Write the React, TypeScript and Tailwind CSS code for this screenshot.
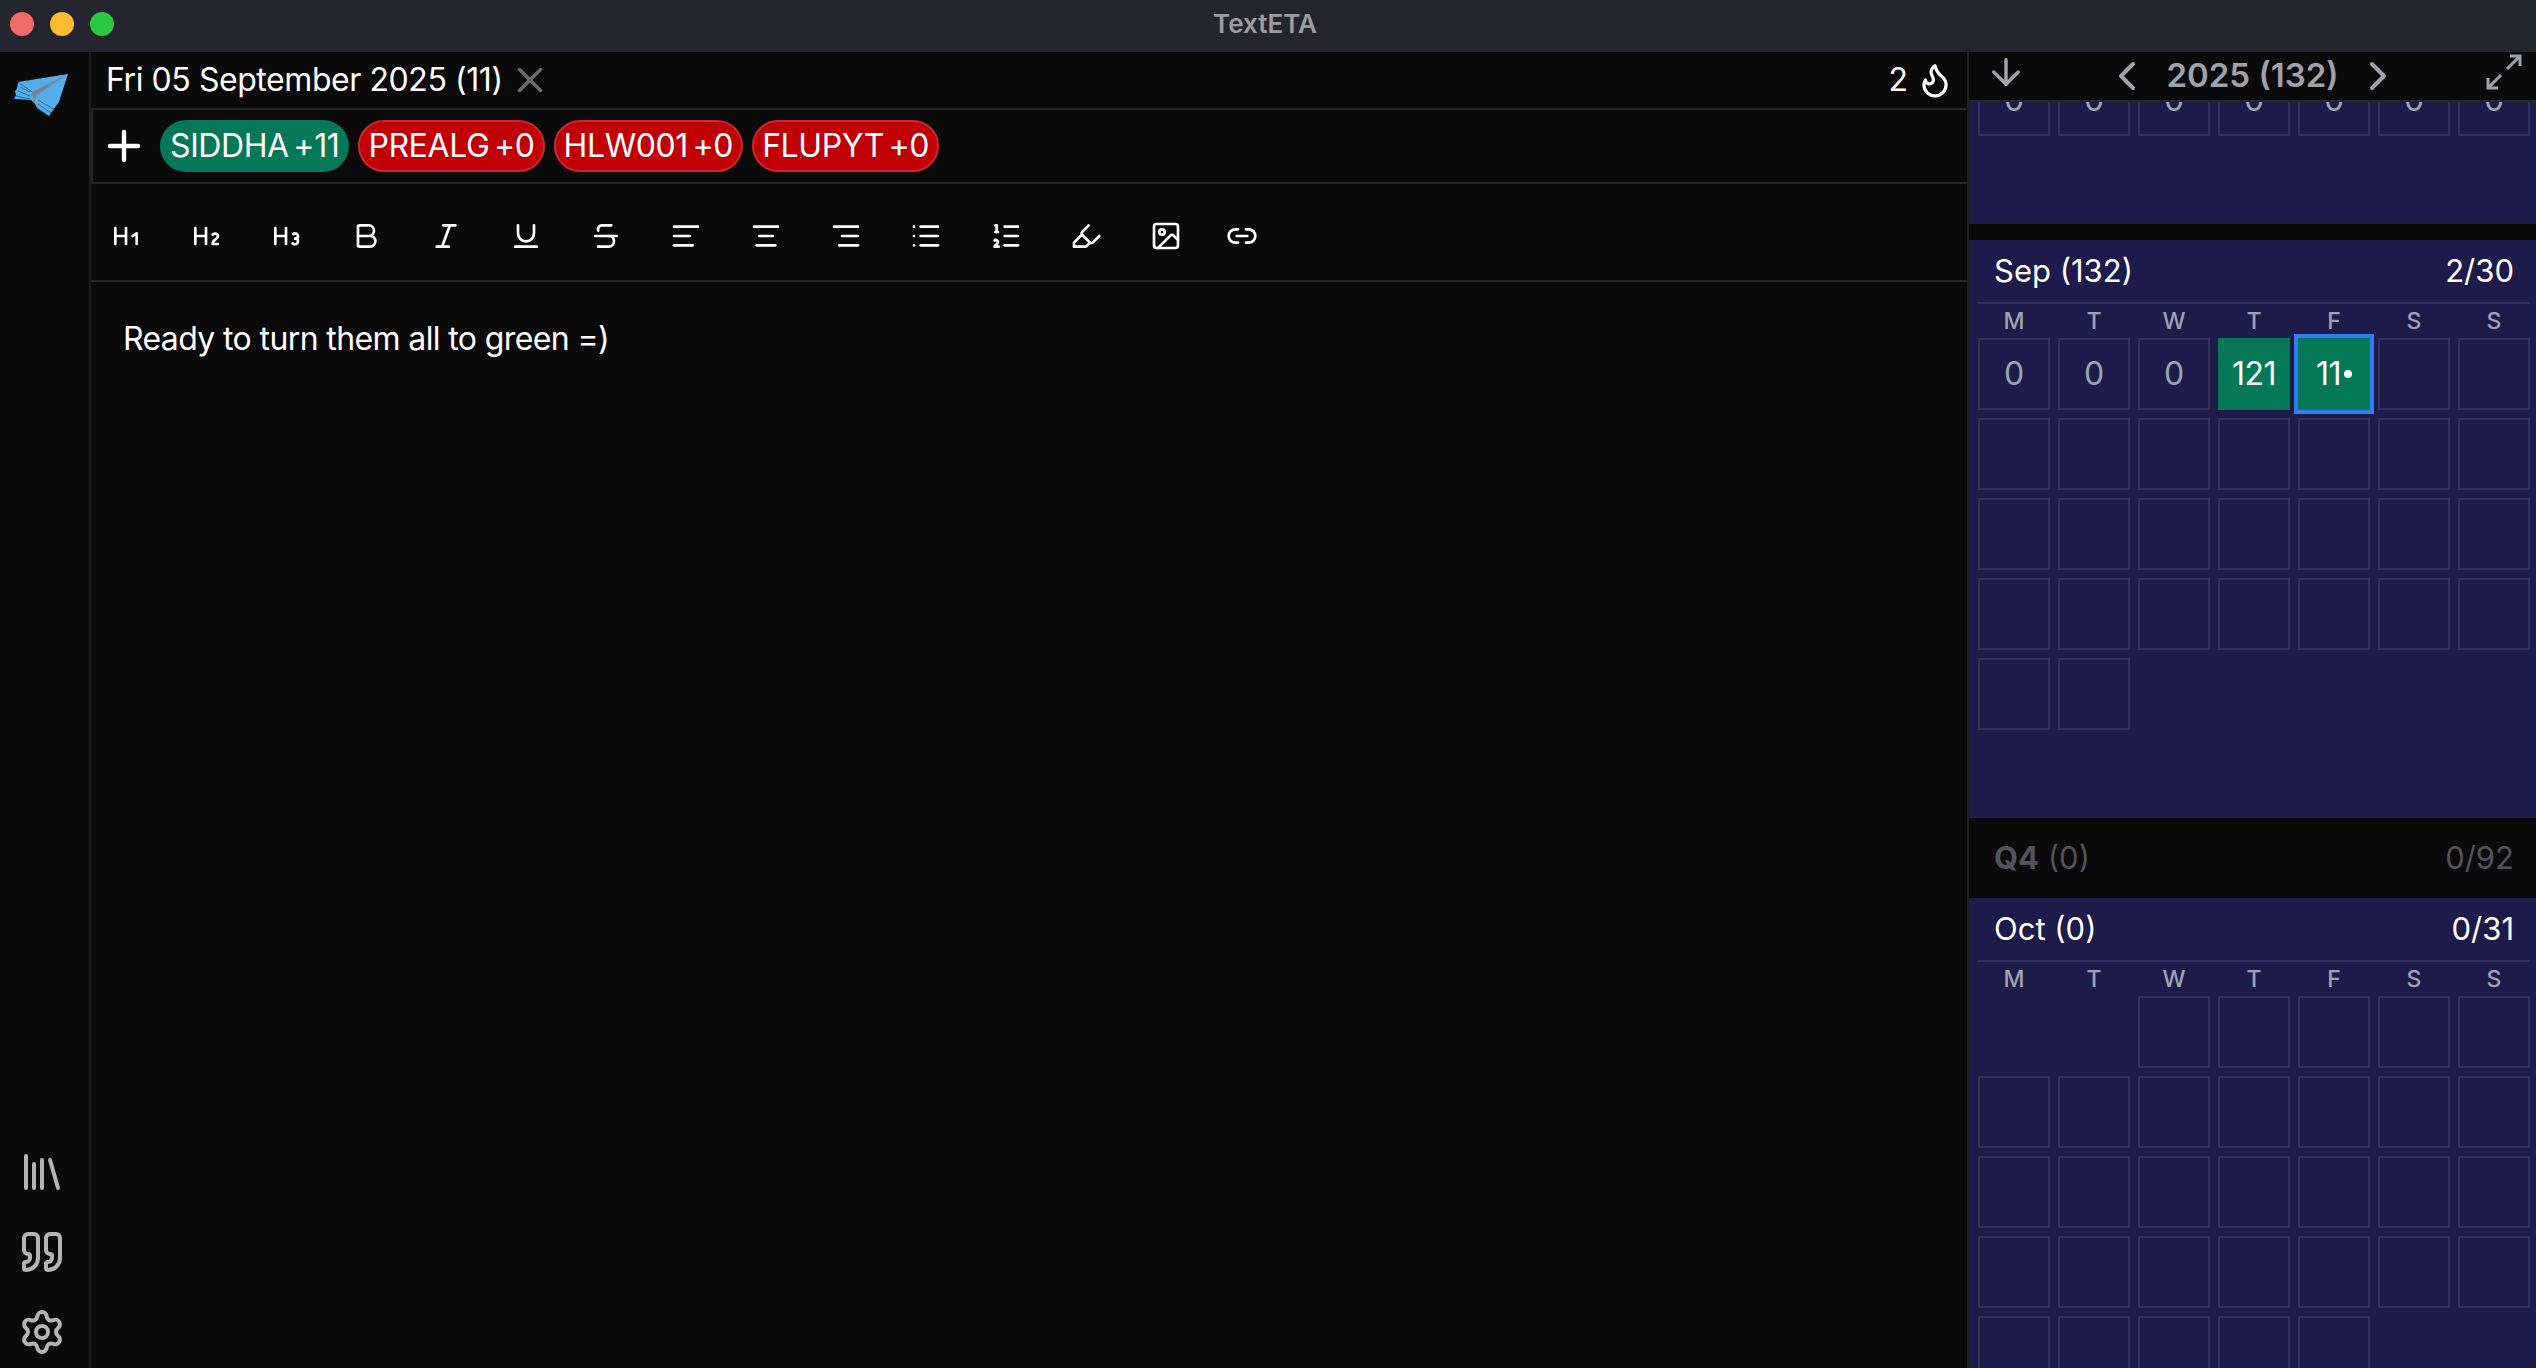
import React from "react";
import {
  Heading1, Heading2, Heading3, Bold, Italic, Underline, Strikethrough,
  AlignLeft, AlignCenter, AlignRight, List, ListOrdered, Highlighter, Image, Link2,
  Plus, X, ArrowDown, ChevronLeft, ChevronRight, Library, Quote, Settings, Flame,
} from "lucide-react";

const days = ["M", "T", "W", "T", "F", "S", "S"];

function Cell({ v, kind }: { v?: string; kind?: "blank" | "green" | "today" }) {
  if (kind === "blank") return <div className="h-[72px] w-[72px]" />;
  if (kind === "green")
    return <div className="flex h-[72px] w-[72px] items-center justify-center bg-[#047857] text-[32px] tracking-[-0.5px] text-white">{v}</div>;
  if (kind === "today")
    return (
      <div className="flex h-[72px] w-[72px] items-center justify-center bg-[#047857] text-[32px] tracking-[-0.5px] text-white outline-4 outline-[#2f7df0]">
        11<span className="ml-[3px] h-[8px] w-[8px] rounded-full bg-white" />
      </div>
    );
  return <div className="flex h-[72px] w-[72px] items-center justify-center border-2 border-[#33305c] text-[32px] text-[#9ca3af]">{v}</div>;
}

function Month({ title, count, first, cells }: { title: string; count: string; first: number; cells: React.ReactNode[] }) {
  const leading = Array.from({ length: first }, (_, i) => <Cell key={"b" + i} kind="blank" />);
  return (
    <section className="bg-[#1e1b4b] pb-[88px] pl-[9px] pr-[6px]">
      <div className="flex h-[64px] items-center justify-between border-b-2 border-[#33305c] px-[16px] text-[31px] text-white">
        <span>{title}</span>
        <span>{count}</span>
      </div>
      <div className="grid grid-cols-[repeat(7,72px)] gap-x-[8px]">
        {days.map((d, i) => (
          <div key={i} className="flex h-[34px] items-center justify-center text-[23px] font-medium text-[#9ca3af]">{d}</div>
        ))}
      </div>
      <div className="grid grid-cols-[repeat(7,72px)] gap-[8px]">
        {leading}
        {cells}
      </div>
    </section>
  );
}

const empties = (n: number) => Array.from({ length: n }, (_, i) => <Cell key={"e" + i} />);

function Tag({ label, green }: { label: string; green?: boolean }) {
  return (
    <span
      className={
        green
          ? "flex h-[52px] items-center rounded-full bg-[#047857] px-[10px] text-[32px] tracking-[-0.4px] text-white [word-spacing:-4px]"
          : "flex h-[52px] items-center rounded-full border-2 border-[#c8282e] bg-[#c00006] px-[8px] text-[32px] tracking-[-0.4px] text-white [word-spacing:-4px]"
      }
    >
      {label}
    </span>
  );
}

const tools = [Heading1, Heading2, Heading3, Bold, Italic, Underline, Strikethrough, AlignLeft, AlignCenter, AlignRight, List, ListOrdered, Highlighter, Image];

export default function App() {
  return (
    <div className="flex h-screen w-screen flex-col overflow-hidden bg-[#0a0a0a] font-[Inter,sans-serif] text-white">
      <header className="relative flex h-[52px] shrink-0 items-center justify-center bg-[#23242e] pb-[5px] pr-[6px]">
        <div className="absolute left-[10px] top-[12px] flex gap-[16px]">
          <span className="h-[24px] w-[24px] rounded-full bg-[#f26b66]" />
          <span className="h-[24px] w-[24px] rounded-full bg-[#febc2e]" />
          <span className="h-[24px] w-[24px] rounded-full bg-[#28c840]" />
        </div>
        <span className="text-[26px] font-semibold text-[#9b9ba1]">TextETA</span>
      </header>
      <div className="flex min-h-0 flex-1">
        <aside className="flex w-[89px] shrink-0 flex-col justify-between pb-[12px] pl-[18px] text-[#b4b4b4]">
          <svg viewBox="0 0 80 80" className="-ml-[18px] -mt-[2px] h-[80px] w-[80px]">
            <polygon points="68,24 18,32 17,39 15,41 16,45 14,49 31,50 35,54 37,58 49,66 53,60 59,52" fill="#54aeec" />
            <polygon points="68,24 32,42 34,54 37,45" fill="#7c8494" />
            <path d="M18 32 32 42M20 37l10 5M18 41l12 5M16 46l14 3M38 50l17 10M38 54l13 9M37 58l10 7" stroke="#2f4f86" strokeWidth="0.8" fill="none" />
          </svg>
          <div className="flex flex-col gap-[32px]">
            <Library size={48} strokeWidth={2} />
            <Quote size={48} strokeWidth={2} />
            <Settings size={48} strokeWidth={2} />
          </div>
        </aside>
        <main className="flex min-w-0 flex-1 flex-col border-l-2 border-[#1f1f1f]">
          <div className="flex h-[58px] shrink-0 items-center justify-between border-b-2 border-[#262626] pl-[15px] pr-[13px]">
            <div className="flex items-center gap-[6px]">
              <span className="text-[32px] tracking-[-0.43px]">Fri 05 September 2025 (11)</span>
              <X size={42} className="text-[#6b6b6b]" strokeWidth={2} />
            </div>
            <div className="flex items-center gap-[8px]">
              <span className="text-[32px]">2</span>
              <Flame size={38} strokeWidth={2} />
            </div>
          </div>
          <div className="flex h-[74px] shrink-0 items-center gap-[9px] border-b-2 border-l-2 border-[#262626] pl-[7px]">
            <Plus size={48} strokeWidth={2.2} className="mr-[3px]" />
            <Tag label="SIDDHA +11" green />
            <Tag label="PREALG +0" />
            <Tag label="HLW001 +0" />
            <Tag label="FLUPYT +0" />
          </div>
          <div className="flex h-[98px] shrink-0 items-center gap-[48px] border-b-2 border-[#262626] pl-[19px] pt-[8px]">
            {tools.map((I, i) => (
              <I key={i} size={32} strokeWidth={2} />
            ))}
            <Link2 size={32} strokeWidth={2} className="-ml-[4px]" />
          </div>
          <div className="px-[32px] pt-[33px] text-[32px] tracking-[-0.62px]">Ready to turn them all to green =)</div>
        </main>
        <aside className="flex w-[569px] shrink-0 flex-col border-l-2 border-[#1f1f1f]">
          <div className="relative flex h-[50px] shrink-0 items-center justify-center border-b-2 border-[#262626] text-[#a1a1aa]">
            <ArrowDown size={42} className="absolute -top-[1px] left-[16px]" />
            <div className="flex items-center gap-[15px]">
              <ChevronLeft size={48} />
              <span className="text-[33px] font-semibold">2025 (132)</span>
              <ChevronRight size={48} />
            </div>
            <svg viewBox="0 0 36 36" className="absolute right-[14px] top-[2px] h-[36px] w-[36px]" fill="none" stroke="currentColor" strokeWidth="3">
              <path d="M34 2 21 15M24 2h10v10M2 34l13-13M2 24v10h10" />
            </svg>
          </div>
          <div className="min-h-0 flex-1 overflow-hidden">
            <div className="bg-[#1e1b4b] pb-[88px] pl-[9px] pr-[6px]">
              <div className="h-[34px] overflow-hidden">
                <div className="-mt-[38px] grid grid-cols-[repeat(7,72px)] gap-[8px]">{empties(7).map((_, i) => <Cell key={i} v="0" />)}</div>
              </div>
            </div>
            <div className="h-[16px]" />
            <Month
              title="Sep (132)"
              count="2/30"
              first={0}
              cells={[
                <Cell key="a" v="0" />, <Cell key="b" v="0" />, <Cell key="c" v="0" />,
                <Cell key="d" v="121" kind="green" />, <Cell key="f" kind="today" />,
                ...empties(2 + 21 + 2),
              ]}
            />
            <div className="flex h-[80px] items-center justify-between pl-[25px] pr-[22px] text-[31px] text-[#52525b]">
              <span><b>Q4</b> (0)</span>
              <span>0/92</span>
            </div>
            <Month title="Oct (0)" count="0/31" first={2} cells={empties(31)} />
          </div>
        </aside>
      </div>
    </div>
  );
}
